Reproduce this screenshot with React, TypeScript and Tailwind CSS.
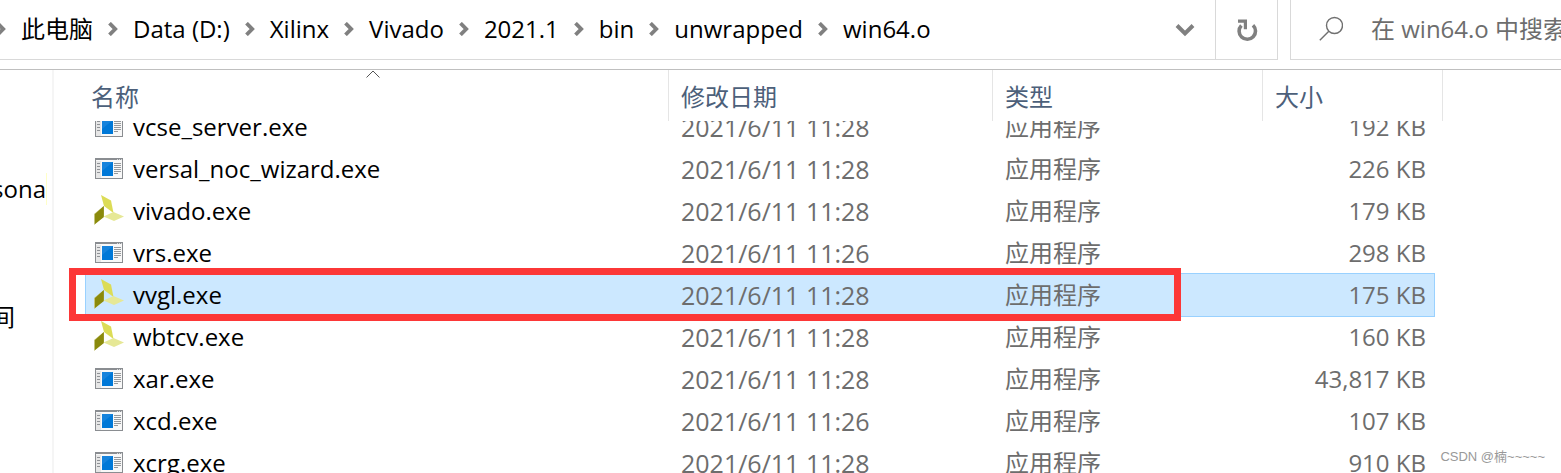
import React, { Fragment, useLayoutEffect, useRef, useState } from "react";

type FileRow = {
  name: string;
  icon: "app" | "vivado";
  date: string;
  size: string;
};

const path: string[] = ["此电脑", "Data (D:)", "Xilinx", "Vivado", "2021.1", "bin", "unwrapped", "win64.o"];

const files: FileRow[] = [
  { name: "vcse_server.exe", icon: "app", date: "2021/6/11 11:28", size: "192 KB" },
  { name: "versal_noc_wizard.exe", icon: "app", date: "2021/6/11 11:28", size: "226 KB" },
  { name: "vivado.exe", icon: "vivado", date: "2021/6/11 11:28", size: "179 KB" },
  { name: "vrs.exe", icon: "app", date: "2021/6/11 11:26", size: "298 KB" },
  { name: "vvgl.exe", icon: "vivado", date: "2021/6/11 11:28", size: "175 KB" },
  { name: "wbtcv.exe", icon: "vivado", date: "2021/6/11 11:28", size: "160 KB" },
  { name: "xar.exe", icon: "app", date: "2021/6/11 11:28", size: "43,817 KB" },
  { name: "xcd.exe", icon: "app", date: "2021/6/11 11:26", size: "107 KB" },
  { name: "xcrg.exe", icon: "app", date: "2021/6/11 11:28", size: "910 KB" },
];

const Chevron = () => (
  <svg width="10" height="14" viewBox="0 0 10 14" className="shrink-0" fill="none" stroke="#808080" strokeWidth="3.8">
    <path d="M1.5 1.2 7.2 7l-5.7 5.8" />
  </svg>
);

const AppIcon = () => (
  <svg width="28" height="21" viewBox="0 0 28 21" className="block">
    <rect x="0.5" y="0.5" width="27" height="20" fill="#f8f8f8" stroke="#8a8d91" />
    <rect x="1" y="3" width="5" height="17" fill="#e6e6e6" />
    <rect width="28" height="2" fill="#8a8d91" />
    <path d="M22 1.5h1M24 1.5h1M26 1.5h1" stroke="#d5d7d9" />
    <path d="M2 5.5h3M2 8.5h3M2 11.5h3M2 14.5h3" stroke="#8f9296" />
    <path d="M7 4h11v14H7z" fill="#0078d7" />
    <path d="M7 4h11L7 13z" fill="#1683dc" />
    <path d="M19 5.5h7M19 7.5h7M19 9.5h7M19 11.5h7M19 13.5h7M19 15.5h4" stroke="#96999c" />
  </svg>
);

const VivadoIcon = () => (
  <svg width="30" height="30" viewBox="0 0 30 30" className="block">
    <path d="M7 0 17 5.5l2.5 12.5L10 11z" fill="#dcdc56" />
    <path d="M9.8 11v11L0 30V19z" fill="#c4c47c" />
    <path d="M9.8 11v11L1 29V19z" fill="#8a8a0c" />
    <path d="M9.5 21.5 19.5 17 30 21.4 20 26z" fill="#e6e896" />
  </svg>
);

const App: React.FC = () => {
  const [selected, setSelected] = useState("vvgl.exe");
  const [search, setSearch] = useState("");
  const listRef = useRef<HTMLDivElement>(null);

  // the list opens slightly scrolled, under the sticky header
  useLayoutEffect(() => {
    if (listRef.current) listRef.current.scrollTop = 15;
  }, []);

  const cellStyle = (name: string) =>
    selected === name ? "bg-[#cce8ff] shadow-[0_1px_#99d1ff,0_-1px_#99d1ff]" : "";

  return (
    <div className="relative flex h-screen flex-col overflow-hidden bg-white font-['Open_Sans','Noto_Sans_CJK_SC',sans-serif] text-2xl leading-8 text-black">
      <header className="flex h-[60px] shrink-0 gap-3">
        <div className="flex min-w-0 flex-1 border-r border-b border-[#d9d9d9]">
          <nav
            aria-label="路径"
            className="flex min-w-0 flex-1 items-center overflow-hidden pb-0.5 whitespace-nowrap"
          >
            <div className="-ml-1 flex items-center gap-[15px]">
              {path.map((part) => (
                <Fragment key={part}>
                  <Chevron />
                  <a href="#">{part}</a>
                </Fragment>
              ))}
            </div>
          </nav>
          <button type="button" aria-label="以前的位置" className="flex w-[60px] items-center justify-center">
            <svg width="20" height="14" viewBox="0 0 20 14" fill="none" stroke="#808080" strokeWidth="4">
              <path d="M2 2.5 10 10.5 18 2.5" />
            </svg>
          </button>
          <button
            type="button"
            aria-label="刷新"
            className="flex w-[62px] items-center justify-center border-l border-[#d9d9d9]"
          >
            <svg width="22" height="24" viewBox="0 0 22 24" fill="none" stroke="#808080">
              <path d="M17 7.2A8.2 8.2 0 1 1 5.4 7.4" strokeWidth="3.6" />
              <path d="M2 3.2h7.4v8" strokeWidth="3.2" />
            </svg>
          </button>
        </div>
        <div className="flex w-[271px] items-center gap-7 overflow-hidden border-b border-l border-[#d9d9d9] pb-0.5 pl-7">
          <svg width="24" height="26" viewBox="0 0 24 26" className="shrink-0" fill="none" stroke="#707070" strokeWidth="1.4">
            <circle cx="15.5" cy="9.5" r="8" />
            <path d="M9.8 15.2.8 24.2" />
          </svg>
          <input
            type="text"
            aria-label="搜索"
            value={search}
            onChange={(e) => setSearch(e.target.value)}
            placeholder="在 win64.o 中搜索"
            className="w-60 shrink-0 outline-none placeholder:text-[#6d6d6d]"
          />
        </div>
      </header>

      <main className="mt-[9px] flex min-h-0 flex-1 border-t border-[#bfbfbf]">
        <aside className="w-[54px] shrink-0 border-r-2 border-[#f5f5f5] pr-[5px]">
          <ul className="pt-[103px]">
            <li className="flex h-8 items-center justify-end overflow-hidden border-r border-[#ffffc8]">sona</li>
            <li className="mt-24 flex h-8 items-center justify-end overflow-hidden pr-8">间</li>
          </ul>
        </aside>

        <div ref={listRef} className="min-w-0 flex-1 overflow-hidden pl-[31px]">
          <table className="w-[1358px] table-fixed border-separate border-spacing-0 whitespace-nowrap">
            <colgroup>
              <col className="w-[584px]" />
              <col className="w-[324px]" />
              <col className="w-[270px]" />
              <col className="w-[172px]" />
              <col className="w-2" />
            </colgroup>
            <thead className="sticky top-0 z-20 bg-white text-left text-[#4c607a]">
              <tr className="h-[51px]">
                <th className="relative border-r border-[#e5e5e5] p-0 pt-0.5 pl-1.5 font-normal" aria-sort="ascending">
                  <div className="absolute inset-x-0 top-0 flex justify-center pr-2">
                    <svg width="14" height="8" viewBox="0 0 14 8" fill="none" stroke="#555">
                      <path d="M.5 7.5 7 1l6.5 6.5" />
                    </svg>
                  </div>
                  名称
                </th>
                <th className="border-r border-[#e5e5e5] p-0 pt-0.5 pl-3 font-normal">修改日期</th>
                <th className="border-r border-[#e5e5e5] p-0 pt-0.5 pl-3 font-normal">类型</th>
                <th colSpan={2} className="border-r border-[#e5e5e5] p-0 pt-0.5 pl-3 font-normal">
                  大小
                </th>
              </tr>
            </thead>
            <tbody className="text-[#6d6d6d]">
              {files.map((file) => (
                <tr key={file.name} className="h-[42px]" onClick={() => setSelected(file.name)}>
                  <td className={`relative p-0 text-black ${cellStyle(file.name)}`}>
                    <div
                      className={`flex h-[42px] items-center border-l pl-2 ${
                        selected === file.name ? "border-[#99d1ff]" : "border-transparent"
                      }`}
                    >
                      <span className="flex h-8 w-[39px] items-center pb-0.5">
                        {file.icon === "app" ? (
                          <span className="pl-px">
                            <AppIcon />
                          </span>
                        ) : (
                          <VivadoIcon />
                        )}
                      </span>
                      {file.name}
                    </div>
                    {file.name === "vvgl.exe" && (
                      <div className="pointer-events-none absolute -top-1.5 -bottom-[5px] -left-4 z-10 w-[1112px] border-[7px] border-[#fc3737]" />
                    )}
                  </td>
                  <td className={`p-0 pl-3 text-[25px] ${cellStyle(file.name)}`}>{file.date}</td>
                  <td className={`p-0 pl-3 ${cellStyle(file.name)}`}>应用程序</td>
                  <td
                    className={`p-0 pr-2 text-right ${cellStyle(file.name)} ${
                      selected === file.name ? "border-r border-[#99d1ff]" : "border-r border-transparent"
                    }`}
                  >
                    {file.size}
                  </td>
                  <td className="p-0" />
                </tr>
              ))}
            </tbody>
          </table>
        </div>
      </main>

      <p className="absolute right-4 bottom-1.5 text-[13px] leading-5 text-[#999] font-['Liberation_Sans','Noto_Sans_CJK_SC',sans-serif]">
        CSDN @楠~~~~~
      </p>
    </div>
  );
};

export default App;
